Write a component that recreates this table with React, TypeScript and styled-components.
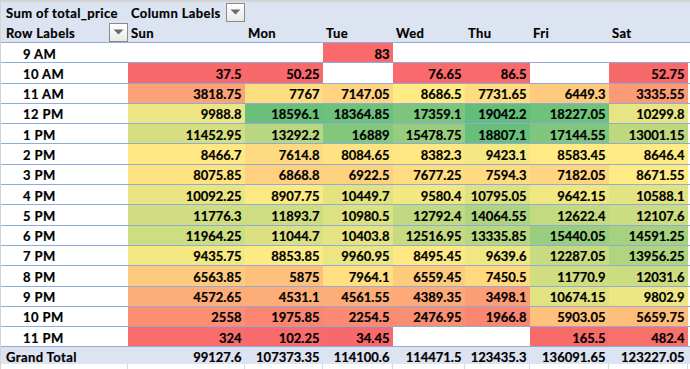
import React from 'react';
import styled, { createGlobalStyle } from 'styled-components';

type Cell = number | null;

const days = ['Sun', 'Mon', 'Tue', 'Wed', 'Thu', 'Fri', 'Sat'];

const rows: { label: string; values: Cell[] }[] = [
  { label: '9 AM', values: [null, null, 83, null, null, null, null] },
  { label: '10 AM', values: [37.5, 50.25, null, 76.65, 86.5, null, 52.75] },
  { label: '11 AM', values: [3818.75, 7767, 7147.05, 8686.5, 7731.65, 6449.3, 3335.55] },
  { label: '12 PM', values: [9988.8, 18596.1, 18364.85, 17359.1, 19042.2, 18227.05, 10299.8] },
  { label: '1 PM', values: [11452.95, 13292.2, 16889, 15478.75, 18807.1, 17144.55, 13001.15] },
  { label: '2 PM', values: [8466.7, 7614.8, 8084.65, 8382.3, 9423.1, 8583.45, 8646.4] },
  { label: '3 PM', values: [8075.85, 6868.8, 6922.5, 7677.25, 7594.3, 7182.05, 8671.55] },
  { label: '4 PM', values: [10092.25, 8907.75, 10449.7, 9580.4, 10795.05, 9642.15, 10588.1] },
  { label: '5 PM', values: [11776.3, 11893.7, 10980.5, 12792.4, 14064.55, 12622.4, 12107.6] },
  { label: '6 PM', values: [11964.25, 11044.7, 10403.8, 12516.95, 13335.85, 15440.05, 14591.25] },
  { label: '7 PM', values: [9435.75, 8853.85, 9960.95, 8495.45, 9639.6, 12287.05, 13956.25] },
  { label: '8 PM', values: [6563.85, 5875, 7964.1, 6559.45, 7450.5, 11770.9, 12031.6] },
  { label: '9 PM', values: [4572.65, 4531.1, 4561.55, 4389.35, 3498.1, 10674.15, 9802.9] },
  { label: '10 PM', values: [2558, 1975.85, 2254.5, 2476.95, 1966.8, 5903.05, 5659.75] },
  { label: '11 PM', values: [324, 102.25, 34.45, null, null, 165.5, 482.4] },
];

const totals = ['99127.6', '107373.35', '114100.6', '114471.5', '123435.3', '136091.65', '123227.05'];

// excel-style 3 colour scale: min red, 50th percentile yellow, max green
const RED = [248, 105, 107];
const YELLOW = [255, 235, 132];
const GREEN = [99, 190, 123];

const sorted = rows
  .flatMap((r) => r.values)
  .filter((v): v is number => v !== null)
  .sort((a, b) => a - b);
const lo = sorted[0];
const hi = sorted[sorted.length - 1];
const percentile = (p: number) => {
  const rank = p * (sorted.length - 1);
  const i = Math.floor(rank);
  const next = sorted[Math.min(i + 1, sorted.length - 1)];
  return sorted[i] + (next - sorted[i]) * (rank - i);
};
const mid = percentile(0.5);

const mix = (a: number[], b: number[], t: number) =>
  `rgb(${a.map((c, i) => Math.round(c + (b[i] - c) * t)).join(',')})`;

const colourFor = (v: number) =>
  v <= mid ? mix(RED, YELLOW, (v - lo) / (mid - lo)) : mix(YELLOW, GREEN, (v - mid) / (hi - mid));

const COLS = '127px 117px 78px 70px 72px 65px 79px 79px 2px';
const HEAD_BG = '#dce3f1';
const LINE = '#8fabdc';

const GlobalStyle = createGlobalStyle`
  body {
    margin: 0;
    background: #ffffff;
    font-family: Lato, "Open Sans", sans-serif;
    font-weight: 700;
    font-size: 13px;
    color: #000000;
    -webkit-text-stroke: 0.2px #000000;
  }
`;

const Sheet = styled.div`
  width: 690px;
  height: 369px;
  overflow: hidden;
  box-sizing: border-box;
  border-left: 1px solid #d4d4d4;
`;

const TopStrip = styled.div`
  height: 2px;
  background: #d3d3d3;
`;

const HeaderBlock = styled.div`
  background: ${HEAD_BG};
  border-bottom: 1px solid ${LINE};
`;

const Row = styled.div<{ $h: number }>`
  display: grid;
  grid-template-columns: ${COLS};
  height: ${(p) => p.$h}px;
  box-sizing: border-box;
`;

const DataRow = styled(Row)`
  border-bottom: 1px solid ${LINE};
`;

const TotalRow = styled(Row)`
  background: ${HEAD_BG};
`;

const HeadCell = styled.div<{ $indent?: number }>`
  display: flex;
  justify-content: space-between;
  align-items: flex-start;
  padding-left: ${(p) => p.$indent ?? 3}px;
  letter-spacing: 0.4px;
  white-space: nowrap;
  min-width: 0;
`;

const HeadText = styled.span`
  padding-top: 3px;
`;

const DropButton = styled.span`
  width: 19px;
  height: 19px;
  margin-top: 0.5px;
  box-sizing: border-box;
  border: 1px solid #8a8a8a;
  background: linear-gradient(#ffffff, #e9e9e9);
  display: flex;
  align-items: center;
  justify-content: center;
  -webkit-text-stroke: 0;
`;

const LabelCell = styled.div`
  padding: 2.5px 0 0 22px;
  letter-spacing: 0.4px;
  white-space: nowrap;
`;

const ValueCell = styled.div<{ $bg: string }>`
  background: ${(p) => p.$bg};
  text-align: right;
  padding: 2.5px 3.5px 0 0;
  white-space: nowrap;
`;

const TotalLabel = styled.div`
  padding: 1.4px 0 0 5px;
  letter-spacing: 0.4px;
  white-space: nowrap;
`;

const TotalValue = styled.div`
  text-align: right;
  padding: 1.4px 3.5px 0 0;
  white-space: nowrap;
`;

const GridLine = styled.div`
  border-right: 1px solid #d9d9d9;
`;

const Caret = () => (
  <svg width="11" height="6" viewBox="0 0 11 6">
    <polygon points="0.5,0.5 10.5,0.5 5.5,5.5" fill="#6a6a6a" />
  </svg>
);

const App = () => (
  <>
    <GlobalStyle />
    <Sheet>
      <TopStrip />
      <HeaderBlock>
        <Row $h={20}>
          <HeadCell $indent={5}>
            <HeadText>Sum of total_price</HeadText>
          </HeadCell>
          <HeadCell>
            <HeadText>Column Labels</HeadText>
            <DropButton>
              <Caret />
            </DropButton>
          </HeadCell>
        </Row>
        <Row $h={20}>
          <HeadCell $indent={5}>
            <HeadText>Row Labels</HeadText>
            <DropButton>
              <Caret />
            </DropButton>
          </HeadCell>
          {days.map((d) => (
            <HeadCell key={d}>
              <HeadText>{d}</HeadText>
            </HeadCell>
          ))}
        </Row>
      </HeaderBlock>
      {rows.map((r) => (
        <DataRow key={r.label} $h={20.3}>
          <LabelCell>{r.label}</LabelCell>
          {r.values.map((v, i) => (
            <ValueCell key={i} $bg={v === null ? '#ffffff' : colourFor(v)}>
              {v === null ? '' : v}
            </ValueCell>
          ))}
        </DataRow>
      ))}
      <TotalRow $h={17}>
        <TotalLabel>Grand Total</TotalLabel>
        {totals.map((t, i) => (
          <TotalValue key={i}>{t}</TotalValue>
        ))}
      </TotalRow>
      <Row $h={6}>
        {Array.from({ length: 8 }, (_, i) => (
          <GridLine key={i} />
        ))}
      </Row>
    </Sheet>
  </>
);

export default App;
